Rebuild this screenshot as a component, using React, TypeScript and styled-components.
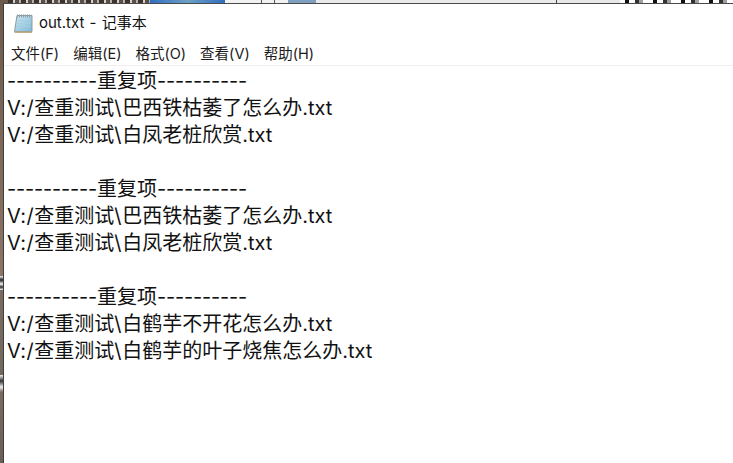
import React from "react";
import styled, { createGlobalStyle } from "styled-components";

const GlobalStyle = createGlobalStyle`
  html, body {
    margin: 0;
    padding: 0;
    width: 733px;
    height: 463px;
    overflow: hidden;
    background: #fff;
  }
`;

const Desktop = styled.div`
  width: 733px;
  height: 463px;
  display: flex;
  flex-direction: column;
  font-family: Inter, "Noto Sans CJK SC", sans-serif;
  overflow: hidden;
`;

const TopStrip = styled.div`
  height: 3px;
  flex: none;
  display: flex;
`;

// the blurred desktop that shows above the window
const StripPart = styled.div<{ $w: number; $bg: string }>`
  width: ${(p) => p.$w}px;
  flex: none;
  background: ${(p) => p.$bg};
`;

const Body = styled.div`
  flex: 1;
  display: flex;
  min-height: 0;
`;

const LeftStrip = styled.div`
  width: 3px;
  flex: none;
  background: linear-gradient(
    180deg,
    #6d5a4a 0,
    #8c7466 273px,
    #f4f4f4 273px,
    #222 277px,
    #f4f4f4 281px,
    #333 284px,
    #f4f4f4 287px,
    #7c6a60 287px,
    #6f6a5c 372px,
    #f0f0f0 372px,
    #333 378px,
    #f0f0f0 384px,
    #7c6a60 389px,
    #6a5f55 100%
  );
`;

const Window = styled.div`
  flex: 1;
  min-width: 0;
  display: flex;
  flex-direction: column;
  background: #fff;
  border-top: 1px solid #4a4a4a;
  border-left: 1px solid #3e3e3e;
`;

const TitleBar = styled.div`
  height: 36px;
  box-sizing: border-box;
  padding: 2px 0 0 9px;
  display: flex;
  align-items: center;
  gap: 6px;
  flex: none;
`;

const Title = styled.span`
  font-size: 15px;
  word-spacing: 1px;
  color: #111;
  line-height: 20px;
`;

const MenuBar = styled.div`
  height: 26px;
  flex: none;
  box-sizing: border-box;
  padding: 2px 0 0 7px;
  display: flex;
  align-items: center;
  gap: 14px;
  border-bottom: 1px solid #efefef;
`;

const MenuItem = styled.span`
  font-size: 14.5px;
  color: #1a1a1a;
  line-height: 18px;
`;

const Editor = styled.pre`
  flex: 1;
  margin: 0;
  padding: 2px 0 0 3px;
  font-family: Inter, "Noto Sans CJK SC", sans-serif;
  font-size: 20px;
  line-height: 27px;
  color: #111;
  white-space: pre;
`;

// the latin parts of a path run a little wider than Inter
const PathMark = styled.span`
  letter-spacing: 0.6px;
`;

const Dashes = styled.span`
  letter-spacing: -0.2px;
`;

const NotepadIcon = () => (
  <svg width="20" height="21" viewBox="0 0 20 21">
    <defs>
      <linearGradient id="pad" x1="0" y1="0" x2="1" y2="1">
        <stop offset="0" stopColor="#cfe8f3" />
        <stop offset="1" stopColor="#7fb9d6" />
      </linearGradient>
    </defs>
    <path d="M4 2.5 H19 V18.5 H1.5 Z" fill="url(#pad)" stroke="#8a9a9c" strokeWidth="1" />
    <path d="M1.5 18.5 H19 V20 H1.5 Z" fill="#c2ad84" />
    <path d="M4 3 H18.5" stroke="#8f9fa5" strokeWidth="3" strokeDasharray="1 1" />
    <path d="M4.5 7.5 H17M4 10.5 H17M3.5 13.5 H17" stroke="#a6cfe2" strokeWidth="1" />
  </svg>
);

const menus = ["文件(F)", "编辑(E)", "格式(O)", "查看(V)", "帮助(H)"];

const groups = [
  ["巴西铁枯萎了怎么办.txt", "白凤老桩欣赏.txt"],
  ["巴西铁枯萎了怎么办.txt", "白凤老桩欣赏.txt"],
  ["白鹤芋不开花怎么办.txt", "白鹤芋的叶子烧焦怎么办.txt"],
];

const PathLine = ({ name }: { name: string }) => (
  <>
    <PathMark>V:/</PathMark>查重测试<PathMark>\</PathMark>
    {name}
    {"\n"}
  </>
);

export default function App() {
  return (
    <>
      <GlobalStyle />
      <Desktop>
        <TopStrip>
          <StripPart $w={8} $bg="#6a5a4c" />
          <StripPart
            $w={142}
            $bg="repeating-linear-gradient(90deg, #3a3330 0 5px, #d8d2cc 5px 7px, #57504a 7px 11px, #b8b0a8 11px 13px)"
          />
          <StripPart $w={75} $bg="linear-gradient(90deg, #2f6fc0, #6f9fc4 50%, #2f6fc0)" />
          <StripPart
            $w={395}
            $bg="linear-gradient(90deg, #f2f2f2 0 36px, #555 36px 37px, #f2f2f2 37px 49px, #555 49px 50px, #f2f2f2 50px 63px, #7f9fc0 63px 91px, #eaeaea 91px 331px, #444 331px 332px, #e8e8e8 332px)"
          />
          <StripPart
            $w={113}
            $bg="repeating-linear-gradient(90deg, #fff 0 5px, #111 5px 9px, #fff 9px 15px, #333 15px 19px, #a0a0a0 19px 23px, #fff 23px 28px)"
          />
        </TopStrip>
        <Body>
          <LeftStrip />
          <Window>
            <TitleBar>
              <NotepadIcon />
              <Title>out.txt - 记事本</Title>
            </TitleBar>
            <MenuBar>
              {menus.map((m) => (
                <MenuItem key={m}>{m}</MenuItem>
              ))}
            </MenuBar>
            <Editor>
              {groups.map((files, i) => (
                <React.Fragment key={i}>
                  <Dashes>----------</Dashes>重复项<Dashes>----------</Dashes>
                  {"\n"}
                  {files.map((f, j) => (
                    <PathLine key={j} name={f} />
                  ))}
                  {"\n"}
                </React.Fragment>
              ))}
            </Editor>
          </Window>
        </Body>
      </Desktop>
    </>
  );
}
